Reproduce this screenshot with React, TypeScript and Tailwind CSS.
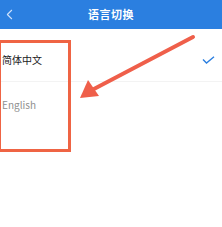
import { ChevronLeft } from "lucide-react";

const font = { fontFamily: '"Noto Sans CJK SC", "Noto Sans", sans-serif' };

export default function App() {
  return (
    <div className="relative w-[222px] h-[227px] bg-white overflow-hidden" style={font}>
      <div className="relative flex h-[29px] items-center justify-center bg-[#2b7fe0]">
        <ChevronLeft className="absolute left-[1px] top-[6px] h-[17px] w-[17px] text-[#cfe2fb]" strokeWidth={1.5} />
        <span className="text-[11px] font-bold tracking-[0.5px] text-white">语言切换</span>
      </div>
      <div className="pt-[9px]">
        <div className="flex h-[44px] items-center justify-between border-b border-[#f3f3f3] pl-[2px] pr-[7px]">
          <span className="text-[10px] text-[#222]">简体中文</span>
          <svg width="13" height="8" viewBox="0 0 13 8" fill="none">
            <path d="M1 3.5 L4.5 7 L12 0.8" stroke="#2b7fe0" strokeWidth="1.4" />
          </svg>
        </div>
        <div className="flex h-[44px] items-center pl-[2px]">
          <span className="text-[10px] text-[#8f8f8f]">English</span>
        </div>
      </div>
      {/* annotation box */}
      <div className="absolute left-[-2px] top-[40px] h-[112px] w-[73px] border-[3px] border-[#ef6444]" />
      {/* annotation arrow */}
      <svg className="absolute left-0 top-0" width="222" height="227" viewBox="0 0 222 227">
        <line x1="193" y1="37" x2="92" y2="90" stroke="#ef5f4a" strokeWidth="4" strokeLinecap="round" />
        <polygon points="80,98 88,80 99,96" fill="#ef5f4a" />
      </svg>
    </div>
  );
}
